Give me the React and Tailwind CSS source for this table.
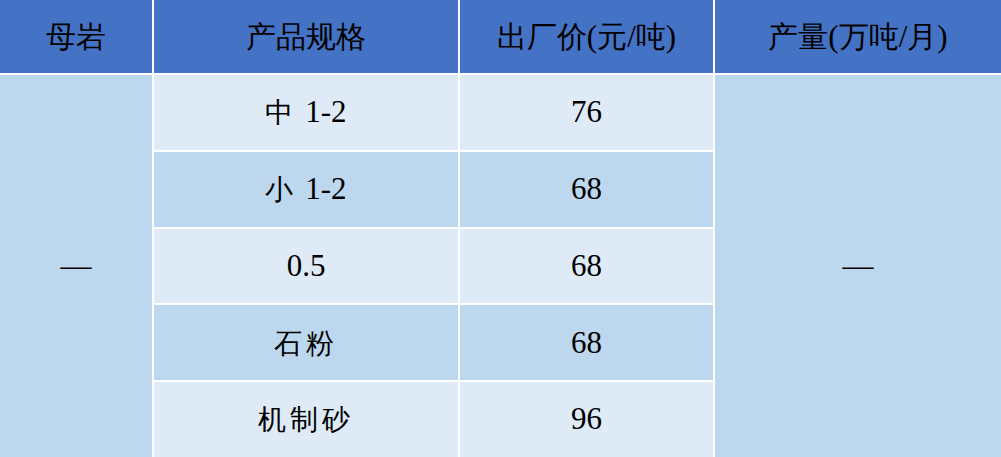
// split text into CJK / latin runs so each gets its own font
function Mixed({ text, light }) {
  const parts = text.match(/[\u4e00-\u9fff]+|[^\u4e00-\u9fff]+/g) || [];
  return (
    <span>
      {parts.map((p, i) =>
        /[\u4e00-\u9fff]/.test(p) ? (
          light ? (
            <span key={i} className="font-sans font-light text-[28px] tracking-[4px]">
              {p}
            </span>
          ) : (
            <span key={i} className="font-sans text-[30px]">
              {p}
            </span>
          )
        ) : (
          <span key={i} className="font-['Liberation_Serif']">{p}</span>
        )
      )}
    </span>
  );
}

export default function App() {
  const rows = [
    { spec: "中 1-2", price: "76", light: true },
    { spec: "小 1-2", price: "68", light: false },
    { spec: "0.5", price: "68", light: true },
    { spec: "石粉", price: "68", light: false },
    { spec: "机制砂", price: "96", light: true },
  ];

  const head = "bg-[#4472c4] flex items-center justify-center text-[31px] text-black font-serif";
  const cell = "flex items-center justify-center text-[31px] text-black font-serif";

  return (
    <div className="w-[1001px] h-[457px] bg-white overflow-hidden">
      <div className="grid h-full grid-cols-[152px_304px_253px_1fr] grid-rows-[73px_repeat(5,1fr)] gap-[2px]">
        <div className={head}><Mixed text="母岩" /></div>
        <div className={head}><Mixed text="产品规格" /></div>
        <div className={head}><Mixed text="出厂价(元/吨)" /></div>
        <div className={head}><Mixed text="产量(万吨/月)" /></div>

        <div className={`${cell} bg-[#bdd7ee] row-start-2 row-span-5 col-start-1`}>
          <span className="font-['Liberation_Serif']">—</span>
        </div>

        {rows.map((r, i) => (
          <div
            key={"s" + i}
            className={`${cell} col-start-2 ${r.light ? "bg-[#deeaf6]" : "bg-[#bdd7ee]"}`}
          >
            <Mixed text={r.spec} light />
          </div>
        ))}
        {rows.map((r, i) => (
          <div
            key={"p" + i}
            className={`${cell} col-start-3 ${r.light ? "bg-[#deeaf6]" : "bg-[#bdd7ee]"}`}
            style={{ gridRowStart: i + 2 }}
          >
            <span className="font-['Liberation_Serif']">{r.price}</span>
          </div>
        ))}

        <div className={`${cell} bg-[#bdd7ee] row-start-2 row-span-5 col-start-4`}>
          <span className="font-['Liberation_Serif']">—</span>
        </div>
      </div>
    </div>
  );
}
